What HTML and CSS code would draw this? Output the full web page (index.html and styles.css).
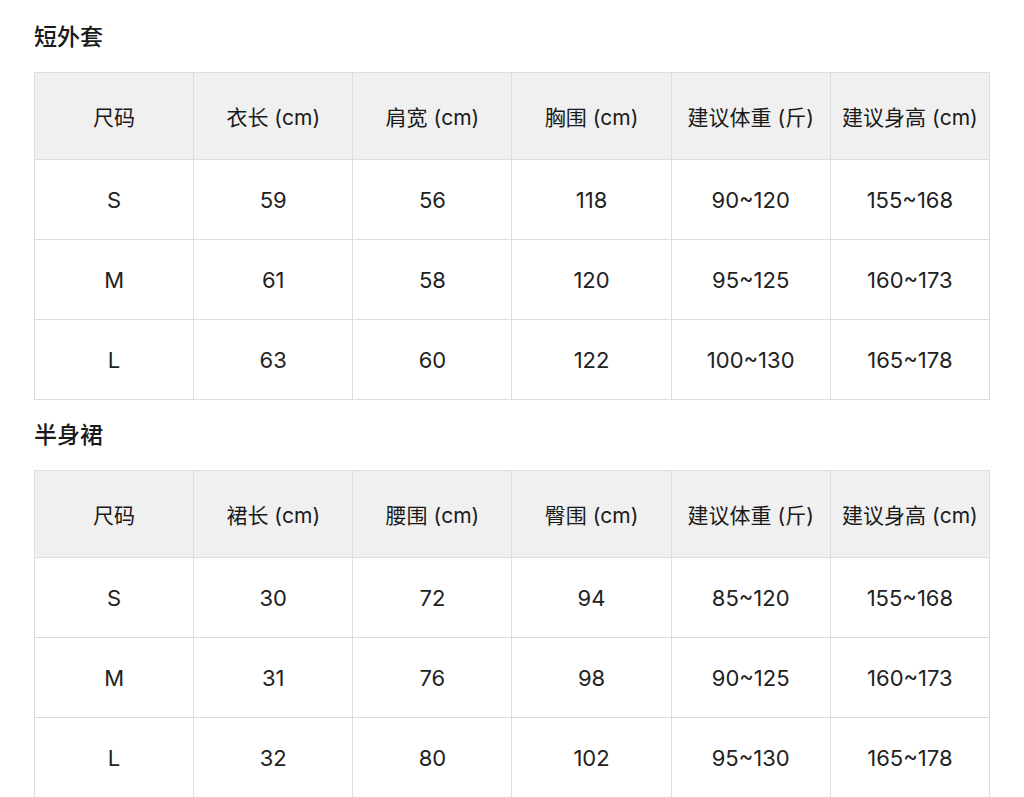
FILE: index.html
```html
<!DOCTYPE html>
<html lang="zh">
<head>
<meta charset="utf-8">
<title>尺码表</title>
<link rel="stylesheet" href="styles.css">
</head>
<body>
<div class="page">
  <section class="section">
    <h2 class="title">短外套</h2>
    <table class="size-table">
      <thead>
        <tr><th>尺码</th><th>衣长 (cm)</th><th>肩宽 (cm)</th><th>胸围 (cm)</th><th>建议体重 (斤)</th><th>建议身高 (cm)</th></tr>
      </thead>
      <tbody>
        <tr><td>S</td><td>59</td><td>56</td><td>118</td><td>90~120</td><td>155~168</td></tr>
        <tr><td>M</td><td>61</td><td>58</td><td>120</td><td>95~125</td><td>160~173</td></tr>
        <tr><td>L</td><td>63</td><td>60</td><td>122</td><td>100~130</td><td>165~178</td></tr>
      </tbody>
    </table>
  </section>
  <section class="section">
    <h2 class="title">半身裙</h2>
    <table class="size-table">
      <thead>
        <tr><th>尺码</th><th>裙长 (cm)</th><th>腰围 (cm)</th><th>臀围 (cm)</th><th>建议体重 (斤)</th><th>建议身高 (cm)</th></tr>
      </thead>
      <tbody>
        <tr><td>S</td><td>30</td><td>72</td><td>94</td><td>85~120</td><td>155~168</td></tr>
        <tr><td>M</td><td>31</td><td>76</td><td>98</td><td>90~125</td><td>160~173</td></tr>
        <tr><td>L</td><td>32</td><td>80</td><td>102</td><td>95~130</td><td>165~178</td></tr>
      </tbody>
    </table>
  </section>
</div>
</body>
</html>
```
FILE: styles.css
```css
html, body {
  margin: 0;
  padding: 0;
  background: #ffffff;
}
body {
  font-family: Inter, "Noto Sans CJK SC", sans-serif;
  color: #1f1f1f;
}
.page {
  padding: 0 34px;
}
.section {
  padding-top: 22px;
}
.section + .section {
  padding-top: 20px;
}
.title {
  margin: 0 0 20px 0;
  font-size: 23px;
  line-height: 30px;
  font-weight: 500;
  color: #1a1a1a;
}
.size-table {
  width: 956px;
  table-layout: fixed;
  border-collapse: collapse;
}
.size-table th,
.size-table td {
  border: 1px solid #dddddd;
  text-align: center;
  vertical-align: middle;
  padding: 0;
}
.size-table th {
  height: 86px;
  background: #f0f0f0;
  font-size: 21px;
  font-weight: 400;
  color: #1a1a1a;
}
.size-table td {
  height: 79px;
  font-size: 22px;
  font-weight: 400;
  color: #222222;
}
```
